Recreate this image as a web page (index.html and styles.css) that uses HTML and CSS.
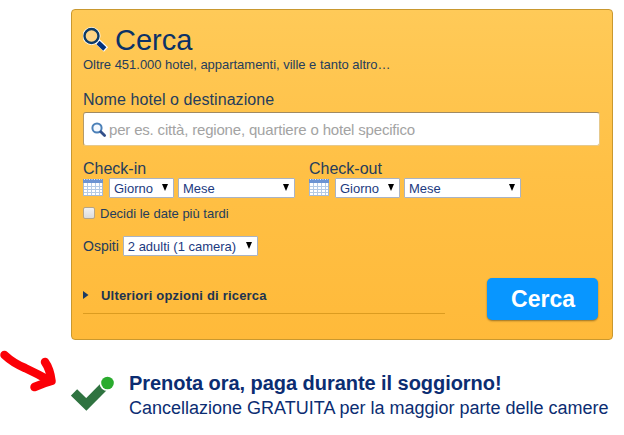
FILE: index.html
```html
<!DOCTYPE html>
<html lang="it">
<head>
  <meta charset="UTF-8">
  <meta name="viewport" content="width=device-width, initial-scale=1.0">
  <title>Cerca hotel</title>
  <link rel="stylesheet" href="styles.css">
</head>
<body>
  <form class="searchbox">
    <h1 class="title">
      <svg class="title-icon" width="26" height="26" viewBox="0 0 26 26">
        <path d="M14 14L23 22.5" stroke="#fff" stroke-width="6"/>
        <circle cx="8.500" cy="9" r="7" fill="#ffd98a" stroke="#fff" stroke-width="4"/>
        <circle cx="8.500" cy="9" r="7" fill="#ffd585" stroke="#0d3b66" stroke-width="2.4"/>
        <path d="M15 15.5L21.800 22" stroke="#03327f" stroke-width="4.6"/>
      </svg>
      <span>Cerca</span>
    </h1>
    <p class="subtitle">Oltre 451.000 hotel, appartamenti, ville e tanto altro…</p>

    <label class="label" for="destination">Nome hotel o destinazione</label>
    <div class="destination">
      <svg width="16" height="16" viewBox="0 0 16 16">
        <circle cx="6" cy="6" r="4.6" fill="#f4f9ff" stroke="#4b80b8" stroke-width="2"/>
        <path d="M9.8 9.8L13.6 13.6" stroke="#33508a" stroke-width="2.8" stroke-linecap="round"/>
      </svg>
      <input type="text" id="destination" placeholder="per es. città, regione, quartiere o hotel specifico">
    </div>

    <div class="dates">
      <div class="date">
        <div class="date-label">Check-in</div>
        <div class="date-fields">
          <svg class="calendar" width="20" height="18" viewBox="0 0 20 18">
            <rect x="0.5" y="1.5" width="19" height="16" fill="#fff" stroke="#a5bbd8"/>
            <path d="M0 1h20v4H0z" fill="#6d94d2"/>
            <path d="M1 1.5h18" stroke="#dce8fa" stroke-dasharray="1 1.5"/>
            <path d="M4.5 5v12M8.5 5v12M12.5 5v12M16.5 5v12M1 8.5h18M1 11.5h18M1 14.5h18" stroke="#b5cbe6"/>
          </svg>
          <span class="select day"><select><option>Giorno</option></select></span>
          <span class="select month"><select><option>Mese</option></select></span>
        </div>
      </div>
      <div class="date">
        <div class="date-label">Check-out</div>
        <div class="date-fields">
          <svg class="calendar" width="20" height="18" viewBox="0 0 20 18">
            <rect x="0.5" y="1.5" width="19" height="16" fill="#fff" stroke="#a5bbd8"/>
            <path d="M0 1h20v4H0z" fill="#6d94d2"/>
            <path d="M1 1.5h18" stroke="#dce8fa" stroke-dasharray="1 1.5"/>
            <path d="M4.5 5v12M8.5 5v12M12.5 5v12M16.5 5v12M1 8.5h18M1 11.5h18M1 14.5h18" stroke="#b5cbe6"/>
          </svg>
          <span class="select day"><select><option>Giorno</option></select></span>
          <span class="select month"><select><option>Mese</option></select></span>
        </div>
      </div>
    </div>

    <label class="later">
      <input type="checkbox">
      <span>Decidi le date più tardi</span>
    </label>

    <div class="guests">
      <span class="guests-label">Ospiti</span>
      <span class="select rooms"><select><option>2 adulti (1 camera)</option></select></span>
    </div>

    <div class="actions">
      <div class="more">
        <svg width="6" height="9" viewBox="0 0 6 9"><path d="M0 0l5.500 4L0 8z" fill="#1c3a63"/></svg>
        <span>Ulteriori opzioni di ricerca</span>
      </div>
      <button type="submit" class="submit">Cerca</button>
    </div>
  </form>

  <div class="promo">
    <svg class="arrow" width="58" height="44" viewBox="0 0 58 44">
      <path class="shaft" d="M4.500 5Q13 13 25 18Q38 24 50 31"/>
      <path class="head" d="M45 12Q50 19 51.500 31Q44 33 34.500 37"/>
    </svg>
    <svg class="check" width="44" height="36" viewBox="0 0 44 36">
      <path d="M3 17.500L15.300 29.500L32.500 12" fill="none" stroke="#2f7340" stroke-width="9"/>
      <circle cx="36.500" cy="8" r="8" fill="#fff"/>
      <circle cx="36.500" cy="8" r="6.300" fill="#2aab2e"/>
    </svg>
    <div class="promo-text">
      <strong>Prenota ora, paga durante il soggiorno!</strong>
      <p>Cancellazione GRATUITA per la maggior parte delle camere</p>
    </div>
  </div>
</body>
</html>
```

FILE: styles.css
```css
* {
  box-sizing: border-box;
}

body {
  margin: 0;
  padding: 9px 11px 0 0;
  height: 435px;
  overflow: hidden;
  background: #fff;
  color: #253d5c;
  font-family: "Liberation Sans", Arial, sans-serif;
  white-space: nowrap;
}

p {
  margin: 0;
}

svg {
  display: block;
  flex: none;
}

.searchbox {
  width: 542px;
  height: 331px;
  margin-left: 71px;
  padding: 14px 12px 0 11px;
  border: 1px solid #c9982f;
  border-radius: 4px;
  background: linear-gradient(#ffca58, #ffc045 50%, #ffba3a);
}

.title {
  display: flex;
  gap: 6px;
  height: 32px;
  margin: 0;
  color: #0c3267;
  font-size: 29px;
  font-weight: normal;
  line-height: 33px;
}

.title-icon {
  margin-top: 3px;
}

.subtitle {
  margin-top: 1px;
  font-size: 13px;
  line-height: 16px;
  letter-spacing: -0.02px;
}

.label {
  display: block;
  margin-top: 17px;
  font-size: 16px;
  line-height: 20px;
  letter-spacing: 0.07px;
}

.destination {
  display: flex;
  align-items: center;
  gap: 2px;
  width: 517px;
  height: 34px;
  margin-top: 2px;
  padding: 2px 7px 0;
  border: 1px solid #e6c98c;
  border-top-color: #a08a62;
  border-left-color: #b59a68;
  border-radius: 3px;
  background: #fff;
}

.destination input {
  flex: 1;
  padding: 0 0 2px;
  border: 0;
  outline: 0;
  background: none;
  font: 15px "Liberation Sans", Arial, sans-serif;
  letter-spacing: -0.18px;
}

.destination input::placeholder {
  color: #a3a3a3;
}

.dates {
  display: flex;
  gap: 14px;
  margin-top: 13px;
}

.date-label {
  font-size: 16px;
  line-height: 19px;
}

.date-fields {
  display: flex;
  gap: 4px;
}

.calendar {
  margin-right: 2px;
}

.select {
  display: grid;
  align-items: center;
  height: 20px;
  border: 1px solid #a9b3c4;
  border-radius: 1px;
  background: #fff;
}

.select select,
.select::after {
  grid-area: 1 / 1;
}

.select select {
  width: 100%;
  padding: 0 0 0 4px;
  border: 0;
  outline: 0;
  appearance: none;
  background: none;
  color: #1c3a80;
  font: 13px "Liberation Sans", Arial, sans-serif;
}

.select::after {
  content: "";
  justify-self: end;
  margin: 0 5px 1px 0;
  border: 3.5px solid transparent;
  border-top: 7px solid #000;
  border-bottom: 0;
  pointer-events: none;
}

.day {
  width: 65px;
}

.month {
  width: 117px;
}

.later {
  display: flex;
  align-items: center;
  gap: 5px;
  height: 16px;
  margin-top: 8px;
  font-size: 13px;
  line-height: 16px;
}

.later input {
  width: 12px;
  height: 12px;
  margin: 0 0 3px;
  border: 1px solid #b5a588;
  border-radius: 2px;
  appearance: none;
  background: linear-gradient(#f2f2f2, #dcdcdc);
}

.guests {
  display: flex;
  gap: 4px;
  margin-top: 14px;
  font-size: 14px;
  line-height: 20px;
}

.rooms {
  width: 135px;
}

.actions {
  display: flex;
  justify-content: space-between;
  margin-top: 22px;
  padding-right: 2px;
}

.more {
  display: flex;
  align-items: center;
  gap: 12px;
  width: 362px;
  height: 36px;
  border-bottom: 1px solid #dc9c20;
  color: #203350;
  font-size: 13px;
  font-weight: bold;
  letter-spacing: 0.19px;
}

.submit {
  width: 111px;
  height: 42px;
  padding: 0 0 0 1px;
  border: 0;
  border-radius: 5px;
  background: #0896ff;
  box-shadow: 0 1px 2px rgba(0, 0, 0, 0.4);
  color: #fff;
  font: bold 23px "Liberation Sans", Arial, sans-serif;
}

.promo {
  display: flex;
  align-items: flex-start;
  margin-top: 10px;
  color: #0b2d72;
}

.arrow {
  fill: none;
  stroke: #fb0007;
  stroke-width: 8.5;
  stroke-linecap: round;
  stroke-linejoin: round;
}

.check {
  margin: 25px 0 0 13px;
}

.promo-text {
  margin: 20px 0 0 14px;
}

.promo-text strong {
  display: block;
  font-size: 20px;
  line-height: 26px;
  letter-spacing: -0.05px;
}

.promo-text p {
  font-size: 18px;
  line-height: 25px;
}
```
